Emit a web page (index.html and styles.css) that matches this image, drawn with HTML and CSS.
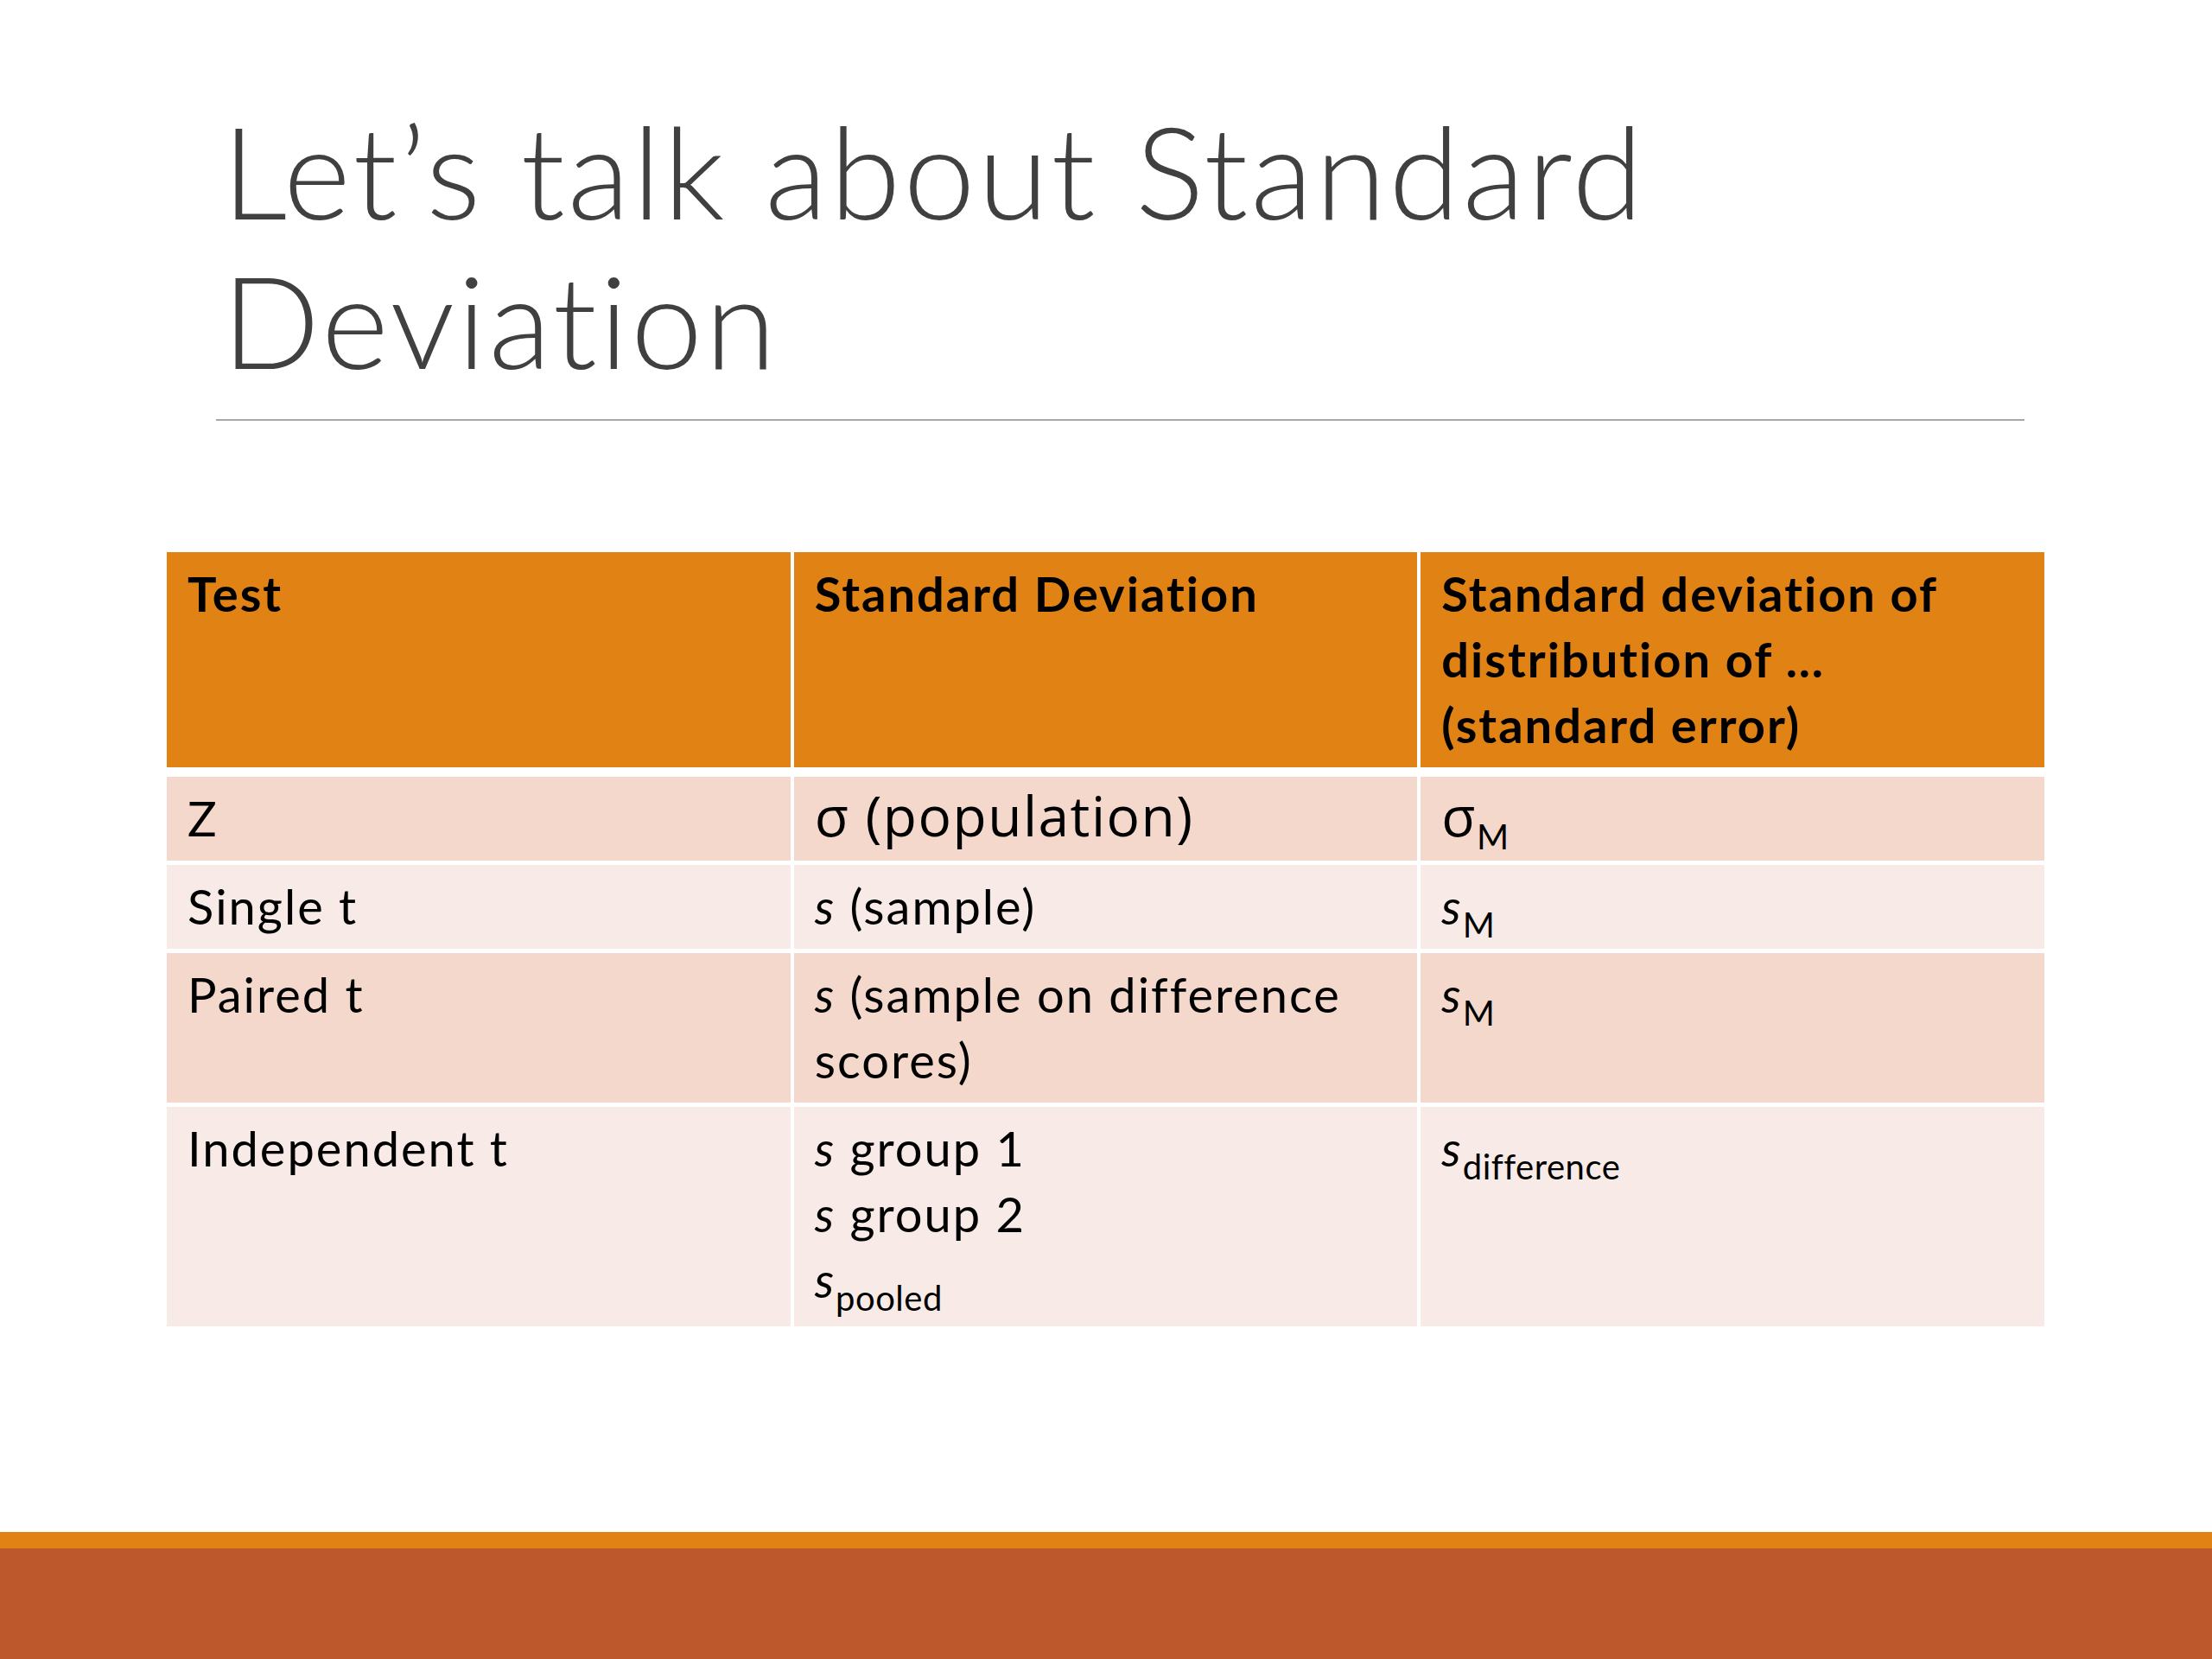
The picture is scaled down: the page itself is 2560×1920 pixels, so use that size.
FILE: index.html
```html
<!DOCTYPE html>
<html lang="en">
<head>
<meta charset="utf-8">
<title>Let’s talk about Standard Deviation</title>
<link rel="stylesheet" href="styles.css">
</head>
<body>
<div class="slide">
  <header class="title-area">
    <h1 class="title">Let’s talk about Standard<br>Deviation</h1>
    <div class="rule"></div>
  </header>

  <div class="grid">
    <div class="cell head">Test</div>
    <div class="cell head">Standard Deviation</div>
    <div class="cell head">Standard deviation of<br>distribution of …<br>(standard error)</div>

    <div class="cell odd">Z</div>
    <div class="cell odd"><span class="alt">σ (population)</span></div>
    <div class="cell odd"><span class="alt">σ</span><span class="sub">M</span></div>

    <div class="cell even">Single t</div>
    <div class="cell even"><i>s</i> (sample)</div>
    <div class="cell even"><i>s</i><span class="sub">M</span></div>

    <div class="cell odd">Paired t</div>
    <div class="cell odd"><i>s</i> (sample on difference scores)</div>
    <div class="cell odd"><i>s</i><span class="sub">M</span></div>

    <div class="cell even tall">Independent t</div>
    <div class="cell even tall"><i>s</i> group 1<br><i>s</i> group 2<br><i>s</i><span class="sub">pooled</span></div>
    <div class="cell even tall"><i>s</i><span class="sub">difference</span></div>
  </div>

  <footer class="footer">
    <div class="footer-stripe"></div>
    <div class="footer-band"></div>
  </footer>
</div>
</body>
</html>
```

FILE: styles.css
```css
html, body {
  margin: 0;
  padding: 0;
  background: #ffffff;
}

.slide {
  width: 2560px;
  height: 1920px;
  display: flex;
  flex-direction: column;
  background: #ffffff;
  overflow: hidden;
}

.title-area {
  display: flex;
  flex-direction: column;
}

.title {
  margin: 0 0 0 257px;
  padding-top: 110px;
  font-family: Lato, "Open Sans", sans-serif;
  font-weight: 300;
  font-size: 149px;
  line-height: 173px;
  letter-spacing: 3px;
  font-variant-ligatures: none;
  color: #404040;
}

.rule {
  margin: 29px 0 0 250px;
  width: 2093px;
  height: 2px;
  background: #a8a8a8;
}

.grid {
  margin: 152px 0 0 193px;
  width: 2173px;
  display: grid;
  grid-template-columns: repeat(3, 1fr);
  column-gap: 4px;
  row-gap: 5px;
  font-family: Lato, "Open Sans", sans-serif;
  font-size: 56px;
  line-height: 76px;
  letter-spacing: 2px;
  font-variant-ligatures: none;
  color: #000000;
}

.cell {
  padding: 10px 20px 11px 24px;
}

.tall {
  padding-bottom: 16px;
}

.head {
  background: #e08214;
  font-weight: 700;
  margin-bottom: 6px;
}

.odd {
  background: #f4d8cc;
}

.even {
  background: #f8ebe7;
}

.alt {
  font-family: "Open Sans", "DejaVu Sans", sans-serif;
  font-size: 64px;
  line-height: 0;
  letter-spacing: 1.5px;
}

.sub {
  font-size: 40px;
  line-height: 0;
  letter-spacing: 0.5px;
  vertical-align: -15px;
}

.footer {
  margin-top: auto;
  display: flex;
  flex-direction: column;
}

.footer-stripe {
  height: 19px;
  background: #e08214;
}

.footer-band {
  height: 128px;
  background: #bd582c;
}
```
